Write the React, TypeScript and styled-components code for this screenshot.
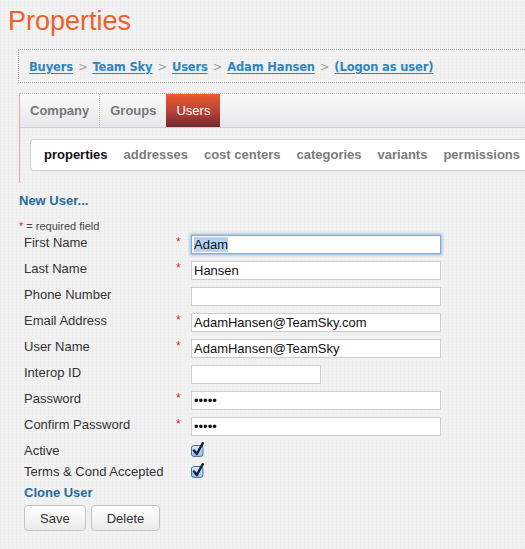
import React, { useEffect, useRef } from 'react';
import styled, { createGlobalStyle } from 'styled-components';

const GlobalStyle = createGlobalStyle`
  html, body {
    margin: 0;
    padding: 0;
    overflow: hidden;
  }
  body {
    background-color: #f2f2f2;
    background-image:
      repeating-linear-gradient(0deg, rgba(0, 0, 0, 0.012) 0 1px, transparent 1px 3px),
      repeating-linear-gradient(90deg, rgba(0, 0, 0, 0.012) 0 1px, transparent 1px 4px);
    font-family: 'Liberation Sans', Arial, sans-serif;
    color: #333;
  }
`;

const crumbs = ['Buyers', 'Team Sky', 'Users', 'Adam Hansen', '(Logon as user)'];
const tabs = ['Company', 'Groups', 'Users'];
const subTabs = ['properties', 'addresses', 'cost centers', 'categories', 'variants', 'permissions'];

type FieldDef = {
  label: string;
  value?: string;
  required?: boolean;
  type?: string;
  short?: boolean;
};

const fields: FieldDef[] = [
  { label: 'First Name', value: 'Adam', required: true },
  { label: 'Last Name', value: 'Hansen', required: true },
  { label: 'Phone Number', value: '' },
  { label: 'Email Address', value: 'AdamHansen@TeamSky.com', required: true },
  { label: 'User Name', value: 'AdamHansen@TeamSky', required: true },
  { label: 'Interop ID', value: '', short: true },
  { label: 'Password', value: 'xxxxx', required: true, type: 'password' },
  { label: 'Confirm Password', value: 'xxxxx', required: true, type: 'password' },
];

const CheckIcon = () => (
  <svg width="14" height="15" viewBox="0 0 14 15">
    <defs>
      <linearGradient id="cb" x1="0" y1="0" x2="0" y2="1">
        <stop offset="0" stopColor="#e4f0fb" />
        <stop offset="1" stopColor="#8fbbe6" />
      </linearGradient>
    </defs>
    <rect x="0.5" y="3.5" width="11.5" height="11" rx="2.5" fill="url(#cb)" stroke="#4d72a0" />
    <path d="M3 8.5 L5.8 12 L11.8 1.2" fill="none" stroke="#0f2240" strokeWidth="2.4" strokeLinecap="round" strokeLinejoin="round" />
  </svg>
);

const App = () => {
  const firstRef = useRef<HTMLInputElement>(null);

  useEffect(() => {
    const el = firstRef.current;
    if (el) {
      el.focus();
      el.setSelectionRange(0, 4);
    }
  }, []);

  return (
    <Page>
      <GlobalStyle />
      <Title>Properties</Title>

      <Breadcrumb>
        {crumbs.map((c, i) => (
          <React.Fragment key={c}>
            {i > 0 && <CrumbSep>&gt;</CrumbSep>}
            <CrumbLink href="#">{c}</CrumbLink>
          </React.Fragment>
        ))}
      </Breadcrumb>

      <TabPanel>
        <TabBar>
          {tabs.map((t, i) => (
            <Tab key={t} active={t === 'Users'} divider={i === 0}>
              {t}
            </Tab>
          ))}
        </TabBar>
        <SubNav>
          {subTabs.map((s) => (
            <SubItem key={s} active={s === 'properties'}>
              {s}
            </SubItem>
          ))}
        </SubNav>
      </TabPanel>

      <NewUser href="#">New User...</NewUser>
      <RequiredNote>
        <Star>*</Star> = required field
      </RequiredNote>

      <Form>
        {fields.map((f, i) => (
          <Row key={f.label}>
            <Label>{f.label}</Label>
            <StarCell>{f.required ? '*' : ''}</StarCell>
            <TextInput
              ref={i === 0 ? firstRef : undefined}
              type={f.type || 'text'}
              defaultValue={f.value}
              short={f.short}
              focused={i === 0}
            />
          </Row>
        ))}
        <CheckRow>
          <Label>Active</Label>
          <StarCell />
          <CheckIcon />
        </CheckRow>
        <CheckRow>
          <Label>Terms &amp; Cond Accepted</Label>
          <StarCell />
          <CheckIcon />
        </CheckRow>
        <CloneLink href="#">Clone User</CloneLink>
        <Buttons>
          <Button>Save</Button>
          <Button>Delete</Button>
        </Buttons>
      </Form>
    </Page>
  );
};

const Page = styled.div`
  padding-top: 5px;
  min-height: 544px;
`;

const Title = styled.h1`
  margin: 0 0 12px 8px;
  font-size: 27px;
  line-height: 32px;
  font-weight: normal;
  color: #f0602f;
`;

const Breadcrumb = styled.div`
  margin-left: 18px;
  box-sizing: border-box;
  height: 34px;
  border: 1px dotted #a8a8a8;
  border-right: none;
  padding: 1px 0 0 10px;
  display: flex;
  align-items: center;
  font-family: 'DejaVu Sans', Verdana, sans-serif;
  font-size: 11.5px;
  letter-spacing: -0.15px;
  font-weight: bold;
  line-height: 32px;
`;

const CrumbLink = styled.a`
  color: #2d86c0;
  text-decoration: underline;
  text-underline-offset: 2px;
`;

const CrumbSep = styled.span`
  color: #a0a0a0;
  font-weight: normal;
  margin: 0 5px;
`;

const TabPanel = styled.div`
  margin: 10px 0 0 19px;
  border-left: 1px solid #eba89a;
  border-top: 1px dotted #bdbdbd;
  padding-bottom: 12px;
`;

const TabBar = styled.div`
  display: flex;
  height: 33px;
  background: linear-gradient(#fbfbfb, #e7e7e9);
  border-bottom: 1px solid #c9d1da;
`;

const Tab = styled.div<{ active?: boolean; divider?: boolean }>`
  padding: 0 10px;
  line-height: 34px;
  font-size: 13px;
  font-weight: ${(p) => (p.active ? 'normal' : 'bold')};
  color: ${(p) => (p.active ? '#fff' : '#777')};
  background: ${(p) => (p.active ? 'linear-gradient(#ee5b2b, #b5403a 55%, #6f2a2b)' : 'transparent')};
  border-right: ${(p) => (p.divider ? '1px dotted #bcbcbc' : 'none')};
`;

const SubNav = styled.div`
  margin: 11px 0 0 10px;
  height: 30px;
  background: #fff;
  border: 1px solid #cfcfcf;
  border-right: none;
  border-radius: 4px 0 0 4px;
  padding-left: 13px;
  display: flex;
  align-items: center;
  gap: 16px;
`;

const SubItem = styled.span<{ active?: boolean }>`
  font-size: 13px;
  font-weight: bold;
  line-height: 30px;
  color: ${(p) => (p.active ? '#111' : '#7a7a7a')};
`;

const NewUser = styled.a`
  display: block;
  margin: 10px 0 0 19px;
  font-size: 13px;
  font-weight: bold;
  line-height: 16px;
  color: #1e6d9e;
  text-decoration: none;
`;

const RequiredNote = styled.div`
  margin: 10px 0 0 19px;
  font-size: 11px;
  line-height: 14px;
  color: #444;
`;

const Star = styled.span`
  color: #e3262b;
`;

const Form = styled.div`
  margin: 2px 0 0 24px;
`;

const Row = styled.div`
  display: grid;
  grid-template-columns: 152px 15px 1fr;
  align-items: start;
  height: 26px;
`;

const CheckRow = styled(Row)`
  height: 21px;
  svg {
    margin-top: -1px;
  }
`;

const Label = styled.span`
  font-size: 13px;
  line-height: 15px;
  color: #333;
`;

const StarCell = styled.span`
  color: #e3262b;
  font-size: 12px;
  line-height: 14px;
`;

const TextInput = styled.input<{ short?: boolean; focused?: boolean }>`
  box-sizing: border-box;
  width: ${(p) => (p.short ? '130px' : '250px')};
  height: 19px;
  margin: 0;
  padding: 0 2px;
  border: 1px solid ${(p) => (p.focused ? '#86a9d4' : '#cdcdcd')};
  box-shadow: ${(p) => (p.focused ? '0 0 3px 1px #8fb6e4' : 'none')};
  background: #fff;
  font-family: 'Liberation Sans', Arial, sans-serif;
  font-size: 13px;
  color: #111;
  outline: none;
  &::selection {
    background: #b2d3f5;
    color: #111;
  }
`;

const CloneLink = styled.a`
  display: block;
  font-size: 13px;
  font-weight: bold;
  line-height: 15px;
  color: #1e6d9e;
  text-decoration: none;
`;

const Buttons = styled.div`
  display: flex;
  gap: 5px;
  margin-top: 5px;
`;

const Button = styled.button`
  height: 26px;
  padding: 0 15px;
  border: 1px solid #c4c4c4;
  border-radius: 4px;
  background: linear-gradient(#ffffff, #ebebeb);
  font-family: 'Liberation Sans', Arial, sans-serif;
  font-size: 13px;
  color: #333;
  cursor: pointer;
`;

export default App;
